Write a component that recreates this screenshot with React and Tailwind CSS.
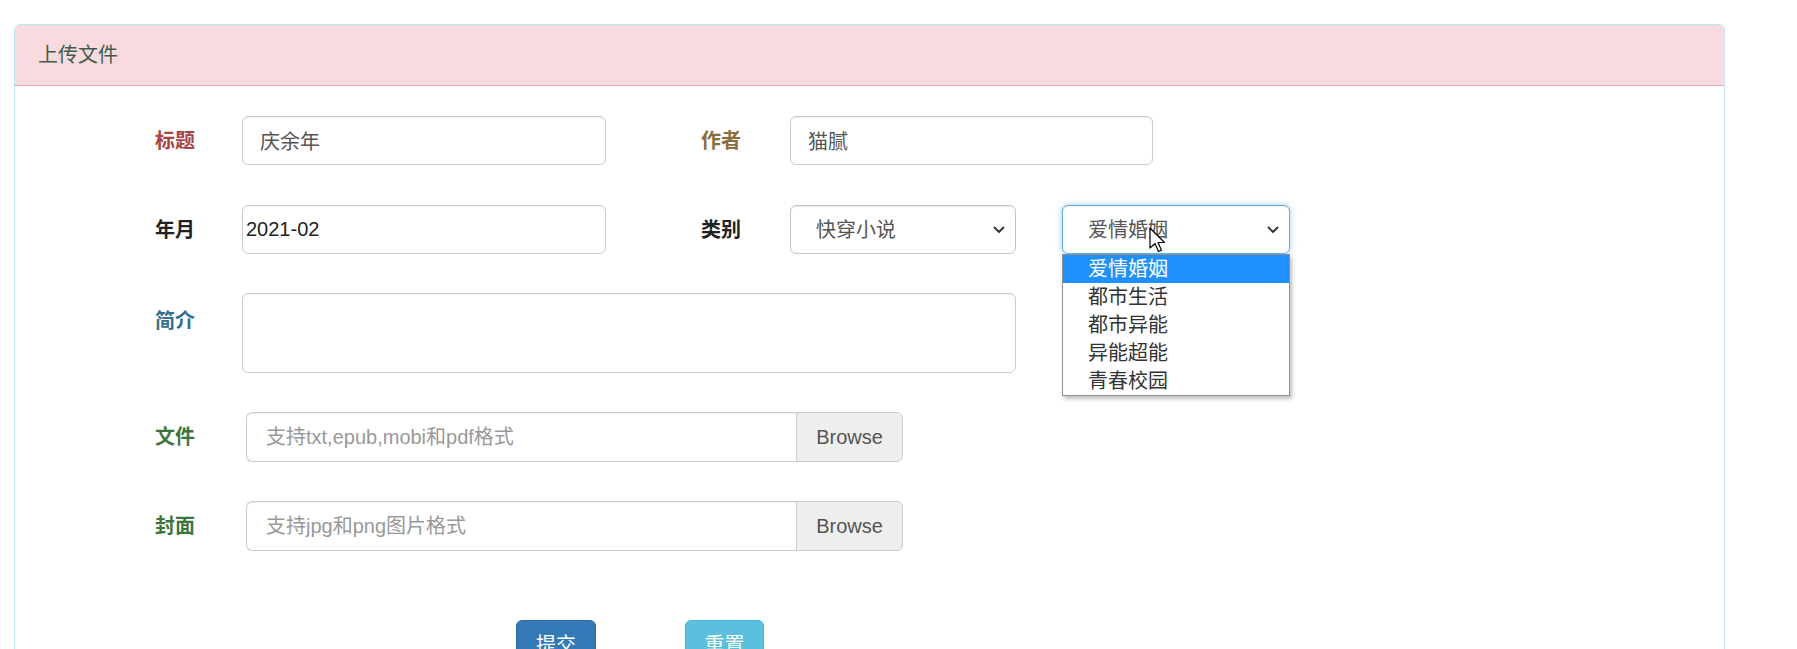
import React from 'react';

const font = { fontFamily: '"Liberation Sans", "Noto Sans CJK SC", sans-serif' };

function Label({ children, color, className = '' }) {
  return (
    <div className={`w-[41px] h-[49px] flex items-center text-[20px] font-bold whitespace-nowrap ${color} ${className}`}>
      {children}
    </div>
  );
}

function Chevron() {
  return (
    <svg width="12" height="8" viewBox="0 0 12 8" className="text-[#333]">
      <path d="M1.5 1.5 L6 6 L10.5 1.5" fill="none" stroke="currentColor" strokeWidth="1.8" strokeLinecap="round" strokeLinejoin="round" />
    </svg>
  );
}

function FakeSelect({ value, width, focused }) {
  return (
    <div
      className={`${width} h-[49px] rounded-[6px] border flex items-center justify-between pl-[25px] pr-[10px] text-[20px] text-[#555] bg-white ${
        focused
          ? 'border-[#66afe9] shadow-[inset_0_1px_1px_rgba(0,0,0,0.075),0_0_6px_rgba(102,175,233,0.6)]'
          : 'border-[#b9c9d6] shadow-[inset_0_1px_1px_rgba(0,0,0,0.075)]'
      }`}
    >
      <span>{value}</span>
      <Chevron />
    </div>
  );
}

function FileInput({ placeholder }) {
  return (
    <div className="ml-[4px] flex w-[657px] h-[50px]">
      <div className="flex-1 border border-[#ccc] border-r-0 rounded-l-[6px] flex items-center pl-[19px] text-[20px] text-[#999] shadow-[inset_0_1px_1px_rgba(0,0,0,0.075)]">
        {placeholder}
      </div>
      <div className="w-[107px] border border-[#ccc] rounded-r-[6px] bg-[#eee] flex items-center justify-center text-[20px] text-[#555]">
        Browse
      </div>
    </div>
  );
}

const options = ['爱情婚姻', '都市生活', '都市异能', '异能超能', '青春校园'];

export default function App() {
  return (
    <div className="bg-white min-h-screen pl-[14px] pt-[24px] pr-[72px]" style={font}>
      <div className="w-[1711px] border border-[#bce8f1] rounded-[6px] relative">
        {/* heading */}
        <div className="h-[61px] bg-[#f9dbdf] border-b border-[#e6aab3] rounded-t-[5px] flex items-center pl-[23px] text-[20px] text-[#3d5e4c]">
          上传文件
        </div>

        {/* body */}
        <div className="pl-[140px] pt-[30px] pb-[40px]">
          {/* row 1 */}
          <div className="flex items-start">
            <Label color="text-[#a94442]">标题</Label>
            <input
              readOnly
              value="庆余年"
              className="ml-[46px] w-[364px] h-[49px] rounded-[6px] border border-[#ccc] px-[17px] text-[20px] text-[#555] outline-none shadow-[inset_0_1px_1px_rgba(0,0,0,0.075)]"
            />
            <Label color="text-[#8a6d3b]" className="ml-[95px] w-[42px]">作者</Label>
            <input
              readOnly
              value="猫腻"
              className="ml-[47px] w-[363px] h-[49px] rounded-[6px] border border-[#ccc] px-[17px] text-[20px] text-[#555] outline-none shadow-[inset_0_1px_1px_rgba(0,0,0,0.075)]"
            />
          </div>

          {/* row 2 */}
          <div className="flex items-start mt-[40px]">
            <Label color="text-[#222]">年月</Label>
            <input
              readOnly
              value="2021-02"
              className="ml-[46px] w-[364px] h-[49px] rounded-[6px] border border-[#ccc] px-[3px] text-[20px] text-[#222] outline-none shadow-[inset_0_1px_1px_rgba(0,0,0,0.075)]"
            />
            <Label color="text-[#222]" className="ml-[95px] w-[42px]">类别</Label>
            <div className="ml-[47px]">
              <FakeSelect value="快穿小说" width="w-[226px]" />
            </div>
            <div className="ml-[46px] relative">
              <FakeSelect value="爱情婚姻" width="w-[228px]" focused />
              {/* open dropdown list */}
              <div className="absolute left-0 top-[49px] w-[228px] bg-white border border-[#8f8f8f] shadow-[2px_3px_4px_rgba(0,0,0,0.25)] z-10">
                {options.map((o, i) => (
                  <div
                    key={o}
                    className={`h-[28px] leading-[28px] pl-[25px] text-[20px] ${
                      i === 0 ? 'bg-[#1e90ff] text-white' : 'text-[#333]'
                    }`}
                  >
                    {o}
                  </div>
                ))}
              </div>
              {/* mouse pointer */}
              <svg
                width="20"
                height="28"
                viewBox="0 0 20 28"
                className="absolute left-[87px] top-[22px] z-20"
              >
                <path
                  d="M1 1 L1 21 L6 16.5 L9.5 24.5 L12.5 23.2 L9 15.5 L15.5 15.5 Z"
                  fill="white"
                  stroke="black"
                  strokeWidth="1.2"
                  strokeLinejoin="round"
                />
              </svg>
            </div>
          </div>

          {/* row 3 */}
          <div className="flex items-start mt-[39px]">
            <div className="w-[41px] pt-[14px] text-[20px] font-bold text-[#31708f] leading-[28px]">简介</div>
            <textarea
              readOnly
              className="ml-[46px] w-[774px] h-[80px] rounded-[6px] border border-[#ccc] px-[17px] py-[8px] text-[20px] text-[#555] outline-none resize-none shadow-[inset_0_1px_1px_rgba(0,0,0,0.075)]"
            />
          </div>

          {/* row 4 */}
          <div className="flex items-start mt-[39px]">
            <Label color="text-[#3c763d]" className="h-[50px]">文件</Label>
            <div className="ml-[46px]">
              <FileInput placeholder="支持txt,epub,mobi和pdf格式" />
            </div>
          </div>

          {/* row 5 */}
          <div className="flex items-start mt-[39px]">
            <Label color="text-[#3c763d]" className="h-[50px]">封面</Label>
            <div className="ml-[46px]">
              <FileInput placeholder="支持jpg和png图片格式" />
            </div>
          </div>

          {/* buttons */}
          <div className="flex items-start mt-[69px] pl-[361px]">
            <button className="w-[80px] h-[49px] rounded-[6px] bg-[#337ab7] border border-[#2e6da4] text-white text-[20px]">
              提交
            </button>
            <button className="ml-[89px] w-[79px] h-[49px] rounded-[6px] bg-[#5bc0de] border border-[#46b8da] text-white text-[20px]">
              重置
            </button>
          </div>
        </div>
      </div>
    </div>
  );
}
